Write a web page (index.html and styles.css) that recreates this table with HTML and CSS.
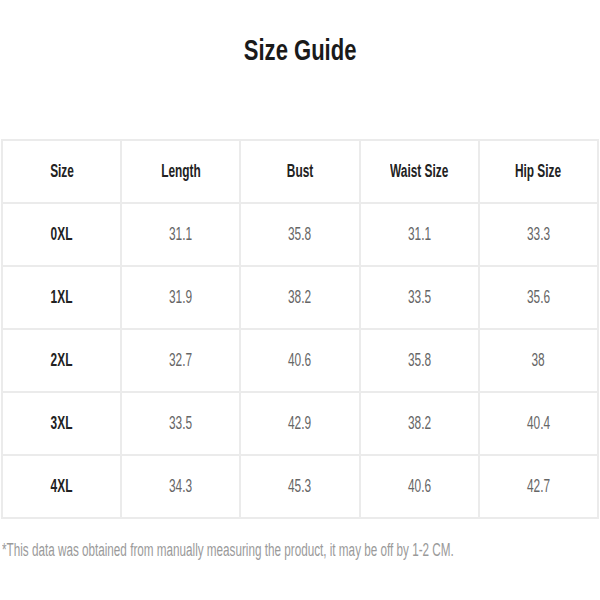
FILE: index.html
```html
<!DOCTYPE html>
<html>
<head>
<meta charset="utf-8">
<link rel="stylesheet" href="styles.css">
</head>
<body>
<div class="page">
  <h1 class="title"><span class="nx">Size Guide</span></h1>
  <table class="sizes">
    <thead>
      <tr><th><span class="nx">Size</span></th><th><span class="nx">Length</span></th><th><span class="nx">Bust</span></th><th><span class="nx">Waist Size</span></th><th><span class="nx">Hip Size</span></th></tr>
    </thead>
    <tbody>
      <tr><th><span class="nx">0XL</span></th><td><span class="nx">31.1</span></td><td><span class="nx">35.8</span></td><td><span class="nx">31.1</span></td><td><span class="nx">33.3</span></td></tr>
      <tr><th><span class="nx">1XL</span></th><td><span class="nx">31.9</span></td><td><span class="nx">38.2</span></td><td><span class="nx">33.5</span></td><td><span class="nx">35.6</span></td></tr>
      <tr><th><span class="nx">2XL</span></th><td><span class="nx">32.7</span></td><td><span class="nx">40.6</span></td><td><span class="nx">35.8</span></td><td><span class="nx">38</span></td></tr>
      <tr><th><span class="nx">3XL</span></th><td><span class="nx">33.5</span></td><td><span class="nx">42.9</span></td><td><span class="nx">38.2</span></td><td><span class="nx">40.4</span></td></tr>
      <tr><th><span class="nx">4XL</span></th><td><span class="nx">34.3</span></td><td><span class="nx">45.3</span></td><td><span class="nx">40.6</span></td><td><span class="nx">42.7</span></td></tr>
    </tbody>
  </table>
  <p class="note"><span class="nx">*This data was obtained from manually measuring the product, it may be off by 1-2 CM.</span></p>
</div>
</body>
</html>
```
FILE: styles.css
```css
html, body {
  margin: 0;
  padding: 0;
  background: #fff;
}
.page {
  width: 600px;
  overflow: hidden;
  font-family: "Liberation Sans", Arial, sans-serif;
}
.nx {
  display: inline-block;
  white-space: nowrap;
  transform: scaleX(0.66);
}
.title {
  margin: 0;
  padding-top: 33px;
  height: 139px;
  box-sizing: border-box;
  text-align: center;
  font-size: 29px;
  line-height: 34px;
  font-weight: bold;
  color: #1a1a1a;
}
.title .nx {
  transform: scaleX(0.76);
}
.sizes {
  margin-left: 1px;
  width: 598px;
  border-collapse: collapse;
  table-layout: fixed;
}
.sizes th, .sizes td {
  border: 2px solid #ebebeb;
  height: 61px;
  padding: 0;
  text-align: center;
  font-size: 18px;
}
.sizes th {
  color: #222;
  font-weight: bold;
}
.sizes td {
  color: #666;
}
.note {
  margin: 20px 0 0 2px;
  font-size: 18px;
  line-height: 22px;
  color: #9a9a9a;
  white-space: nowrap;
  overflow: hidden;
}
.note .nx {
  transform-origin: left center;
  transform: scaleX(0.65);
}
```
